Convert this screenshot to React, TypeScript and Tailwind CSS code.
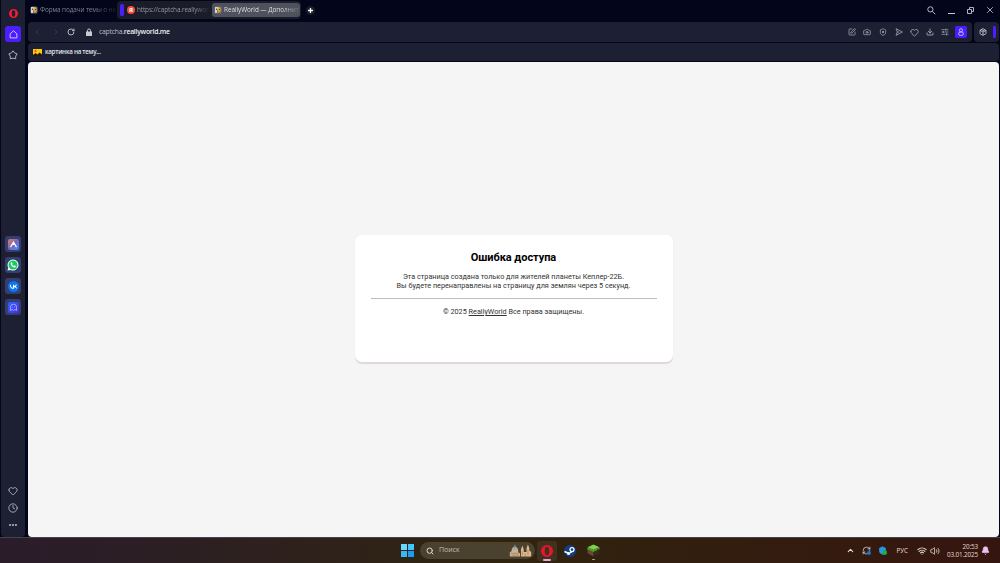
import {
  Bell,
  Camera,
  ChevronLeft,
  ChevronRight,
  ChevronUp,
  Clock,
  Download,
  Ellipsis,
  Heart,
  RefreshCw,
  RotateCw,
  Search,
  Shield,
  SlidersHorizontal,
  SquarePen,
  Volume2,
  Wifi,
  X,
} from "lucide-react";

function OperaLogo({ className }: { className?: string }) {
  return (
    <svg viewBox="0 0 24 24" className={className} aria-label="Opera">
      <path
        fillRule="evenodd"
        fill="currentColor"
        d="M12 0a12 12 0 0 1 0 24a12 12 0 0 1 0-24zM12 3.500a4.600 8.500 0 0 0 0 17a4.600 8.500 0 0 0 0-17z"
      />
    </svg>
  );
}

function SiteIcon() {
  return (
    <svg viewBox="0 0 16 16" className="size-[8px] shrink-0">
      <rect x="1" y="1" width="14" height="14" rx="3" fill="#6d7078" />
      <path d="M2 2h7v5H6v7H2z" fill="#d4d4d4" />
      <path d="M8 3h5v8l-4 3-2-5z" fill="#e3a324" />
      <path d="M4 5h2v3H4zM10 6h2v2h-2z" fill="#504f55" />
    </svg>
  );
}

function Tabs() {
  return (
    <div className="flex h-[22px] items-center pb-[2px] text-[6.400px]">
      <div className="flex w-[89px] items-center gap-[2px] pl-[2px]">
        <SiteIcon />
        <span className="whitespace-nowrap bg-gradient-to-r from-[#858896] from-70% to-[#1b1d2b] bg-clip-text tracking-[-0.110px] text-transparent">
          Форма подачи темы о не
        </span>
      </div>
      <div className="flex h-[18px] w-[184px] shrink-0 items-center rounded-[4px] bg-[#1a1c2a] pl-[3px]">
        <span className="h-[12px] w-[4px] shrink-0 rounded-[1.500px] bg-[#4a1ffc]" />
        <span className="ml-[3px] flex size-[8px] shrink-0 items-center justify-center rounded-full bg-[#fb4b38] text-[6px] font-bold leading-none text-white">
          Я
        </span>
        <span className="ml-[2px] w-[73px] whitespace-nowrap bg-gradient-to-r from-[#9b9eaa] from-80% to-[#1b1d2b] bg-clip-text tracking-[-0.120px] text-transparent">
          https://captcha.reallyworl
        </span>
        <div className="ml-[2px] flex h-[14px] w-[88px] items-center gap-[2px] rounded-[3px] bg-[#4f515c] pl-[2px]">
          <SiteIcon />
          <span className="whitespace-nowrap bg-gradient-to-r from-[#f0f0f3] from-75% to-[#6b6d78] bg-clip-text font-medium tracking-[-0.060px] text-transparent">
            ReallyWorld — Дополнит
          </span>
        </div>
      </div>
      <span className="ml-[5px] flex size-[9px] items-center justify-center rounded-full bg-[#1b1d2b]">
        <svg viewBox="0 0 10 10" className="size-[7px] text-white">
          <path d="M5 1.500v7M1.500 5h7" stroke="currentColor" strokeWidth="1.800" />
        </svg>
      </span>
      <div className="ml-auto flex items-center gap-[10px] pr-[4px] text-[#c6c8d0]">
        <svg viewBox="0 0 24 24" fill="none" stroke="currentColor" strokeWidth="2.500" className="mr-px size-[9px]">
          <circle cx="9" cy="9" r="7" />
          <path d="m14 14 8 8" />
        </svg>
        <svg viewBox="0 0 9 9" className="size-[9px]">
          <path d="M1 7.500h7" stroke="currentColor" />
        </svg>
        <svg viewBox="0 0 9 9" fill="none" stroke="currentColor" strokeWidth="0.900" className="size-[9px]">
          <path d="M1.500 3.500h4v4h-4zM3.500 3V1.500h4v4H6" />
        </svg>
        <X className="size-[10px]" />
      </div>
    </div>
  );
}

function AddressBar() {
  return (
    <div className="flex h-[20px] gap-[2px] text-[#b2b5c1]">
      <div className="flex flex-1 items-center rounded-[4px] bg-[#1c2032] pl-[5px] pr-[5px]">
        <ChevronLeft className="size-[8px] text-[#464a5b]" />
        <ChevronRight className="ml-[11px] size-[8px] text-[#464a5b]" />
        <RotateCw className="ml-[7px] size-[8px] text-[#d0d2da]" strokeWidth={2.500} />
        <svg viewBox="0 0 8 8" className="ml-[10px] size-[8px] text-[#c8cad2]">
          <path d="M1 3.500h6V8H1z" fill="currentColor" />
          <path d="M2.500 4V2.500a1.500 1.500 0 0 1 3 0V4" fill="none" stroke="currentColor" />
        </svg>
        <span className="ml-[6px] text-[6.800px] tracking-[-0.230px] text-[#b9bbc5]">
          captcha.<span className="font-semibold text-[#f0f0f4]">reallyworld.me</span>
        </span>
        <div className="ml-auto flex items-center gap-[7.600px]">
          <SquarePen className="size-[8px]" />
          <Camera className="size-[8px]" />
          <span className="relative size-[8px]">
            <Shield className="size-[8px]" />
            <span className="absolute left-[3px] top-[3px] size-[2px] rounded-full bg-[#b2b5c1]" />
          </span>
          <svg viewBox="0 0 24 24" fill="none" stroke="currentColor" strokeWidth="2.200" strokeLinejoin="round" className="size-[8px]">
            <path d="M3 2l19 10L3 22l4-10zM7 12h6" />
          </svg>
          <Heart className="size-[9px] -mx-[0.500px]" />
          <Download className="size-[8px]" strokeWidth={2.500} />
          <SlidersHorizontal className="size-[8px]" />
          <span className="-ml-[2px] flex size-[12px] items-center justify-center rounded-[2px] bg-[#4a1ffc]">
            <svg viewBox="0 0 8 8" fill="none" stroke="#c9bfff" strokeWidth="0.900" className="size-[8px]">
              <circle cx="4" cy="2.300" r="1.600" />
              <rect x="1.600" y="4.100" width="4.800" height="3.300" rx="1.600" />
            </svg>
          </span>
        </div>
      </div>
      <div className="flex w-[25px] items-center justify-between rounded-[4px] bg-[#1c2032] pl-[5px] pr-[3px]">
        <svg viewBox="0 0 24 24" fill="none" stroke="#d0d2da" strokeWidth="2.400" strokeLinejoin="round" className="size-[8px]">
          <path d="m12 2 9 5v10l-9 5-9-5V7zM3 7l9 5 9-5M12 12v10M7.500 4.500l9 5" />
        </svg>
        <span className="h-[12px] w-[3px] rounded-[1px] bg-[#4a1ffc]" />
      </div>
    </div>
  );
}

function BookmarksBar() {
  return (
    <div className="mt-px flex h-[18px] items-center gap-[3px] rounded-[4px] bg-[#1c2032] pl-[5px]">
      <svg viewBox="0 0 18 14" className="h-[7px] w-[9px]">
        <path d="M0 0h18v14H0z" fill="#fdc70c" />
        <path d="M0 14V12l5-4 4 3 4-4 5 4v3z" fill="#26190a" />
        <circle cx="5" cy="4" r="2" fill="#ee3c21" />
      </svg>
      <span className="text-[6.200px] font-semibold tracking-[-0.240px] text-[#e2e3e9]">картинка на тему...</span>
    </div>
  );
}

function Sidebar() {
  return (
    <aside className="ml-px flex w-[24px] flex-col items-center rounded-b-[4px] bg-[#1c2032] text-[#babdc9]">
      <OperaLogo className="mt-[9px] h-[9px] w-[9px] text-[#f21c35]" />
      <span className="mt-[8px] flex size-[16px] items-center justify-center rounded-[3px] bg-[#4a1ffc]">
        <svg viewBox="0 0 24 24" fill="none" stroke="#d6ceff" strokeWidth="2.500" className="size-[9px]">
          <path d="M3 10 12 2l9 8v11H3z" strokeLinejoin="round" />
        </svg>
      </span>
      <svg viewBox="0 0 24 24" fill="none" stroke="currentColor" strokeWidth="2.200" strokeLinejoin="round" className="mt-[8px] size-[10px]">
        <path d="m12 2 3.800 5L22 9.500l-3.500 5.200V21L12 19.500 5.500 21v-6.300L2 9.500 8.200 7z" />
      </svg>

      <div className="mt-[176px] flex flex-col gap-[5px]">
        <span className="flex size-[16px] items-center justify-center rounded-[3px] bg-[#343e70]">
          <span className="flex size-[11px] items-center justify-center rounded-[2px] bg-gradient-to-br from-[#ef7544] via-[#7666bd] to-[#2a91f5]">
            <svg viewBox="0 0 12 12" fill="none" stroke="white" strokeWidth="1.700" className="size-[9px]">
              <path d="M2 9.500 6 3 10 9.500M6 3v3.500" />
            </svg>
          </span>
        </span>
        <span className="flex size-[16px] items-center justify-center rounded-[3px] bg-[#343e70]">
          <svg viewBox="0 0 24 24" className="size-[12px]">
            <path d="M12 1a11 11 0 1 1-5 20.800L1 23l1.600-5.500A11 11 0 0 1 12 1z" fill="#eefbef" />
            <circle cx="12" cy="12" r="9" fill="#15cb65" />
            <path d="M8.500 6.500c-4 3 3.500 12.500 8.300 10.200l.9-2.500-3-1.500-1.200 1.300c-1.300-.5-2.700-2-3.300-3.400l1-1.200-1.300-2.900z" fill="white" />
          </svg>
        </span>
        <span className="flex size-[16px] items-center justify-center rounded-[3px] bg-[#343e70]">
          <svg viewBox="0 0 24 24" className="size-[11px]">
            <circle cx="12" cy="12" r="12" fill="#0877f2" />
            <path d="M5 8c.3 5 3 8 7 8V8M18.500 8c-.8 2.500-3 4-6 4 3 0 5.500 1.500 6.500 4" fill="none" stroke="white" strokeWidth="2.300" />
          </svg>
        </span>
        <span className="flex size-[16px] items-center justify-center rounded-[3px] bg-[#343e70]">
          <span className="flex size-[11px] items-center justify-center rounded-[2px] bg-gradient-to-br from-[#2563f7] to-[#4925f5]">
            <svg viewBox="0 0 12 12" fill="none" stroke="#a2a4ff" strokeWidth="1.300" className="size-[9px]">
              <path d="M2 10V5.500a4 4 0 0 1 8 0V10L8 8.500 6 10 4 8.500zM4.500 5v1M7.500 5v1" />
            </svg>
          </span>
        </span>
      </div>

      <div className="mt-auto flex flex-col items-center gap-[7px] pb-[7px]">
        <Heart className="size-[10px]" />
        <Clock className="size-[10px]" />
        <Ellipsis className="size-[10px]" strokeWidth={3} />
      </div>
    </aside>
  );
}

function ErrorPage() {
  return (
    <main className="mt-px flex flex-1 flex-col items-center rounded-[4px] bg-[#f5f5f5] pt-[173px] font-[Roboto,sans-serif]">
      <section className="h-[127px] w-[318px] rounded-[7px] bg-white px-[16px] text-center text-[7.280px] leading-[9px] text-[#333] shadow-[0_2px_1px_#e0d8d8]">
        <h1 className="pt-[16px] text-[11px] font-bold leading-[13px] tracking-[-0.050px] text-black">Ошибка доступа</h1>
        <p className="mt-[8px]">
          Эта страница создана только для жителей планеты Кеплер-22Б.
          <br />
          Вы будете перенаправлены на страницу для землян через 5 секунд.
        </p>
        <hr className="mt-[8px] border-[#bcbcbc]" />
        <p className="mt-[8px]">
          © 2025 <a className="underline">ReallyWorld</a> Все права защищены.
        </p>
      </section>
    </main>
  );
}

function Taskbar() {
  return (
    <footer className="flex h-[26px] items-center border-t border-[#45424f] bg-gradient-to-r from-[#2b1c2b] via-[#30240f] via-50% to-[#35150f] text-[#e2d9d8]">
      <div className="ml-[401px] grid size-[13px] grid-cols-2 gap-px">
        <span className="bg-[#68d8fc]" />
        <span className="bg-[#46c6fa]" />
        <span className="bg-[#38b7f7]" />
        <span className="bg-[#1b9cf3]" />
      </div>
      <div className="ml-[6px] flex h-[17px] w-[115px] items-center rounded-full bg-[#4a412f] pl-[6px] pr-[3px]">
        <Search className="size-[8px]" strokeWidth={3} />
        <span className="ml-[5px] text-[7px] text-[#c6bfb2]">Поиск</span>
        <svg viewBox="0 0 48 28" className="ml-auto h-[13px] w-[23px]">
          <path d="M1 27V18l4-3v-3a6 6 0 0 1 10-4 6 6 0 0 1 4 5v5l4 2v7z" fill="#d0b08c" />
          <path d="M6 12c0-9 12-9 12 0zM11 2h2v4h-2z" fill="#91a5b5" />
          <path d="M25 27V12l3-9 3 9v5h6V9l3-8 3 8v5l4 3v10z" fill="#dfb78a" />
          <path d="M3 20h18M5 24h16M28 16v8M34 20v7M40 12v12" stroke="#8b6c50" strokeWidth="1.200" />
        </svg>
      </div>
      <div className="ml-[2px] flex h-[20px] w-[20px] flex-col items-center justify-end rounded-[3px] bg-[#40321f]">
        <OperaLogo className="size-[12px] text-[#e9142d]" />
        <span className="mt-[2px] h-[1.500px] w-[8px] rounded-full bg-[#e6a4e4]" />
      </div>
      <svg viewBox="0 0 24 24" className="ml-[7px] size-[12px]">
        <circle cx="12" cy="12" r="12" fill="#123d80" />
        <path d="M1 13 10 17l6-4 3-6" fill="none" stroke="white" strokeWidth="3" />
        <circle cx="16" cy="9" r="4" fill="#123d80" stroke="white" strokeWidth="2.500" />
        <circle cx="9" cy="17" r="3" fill="white" />
      </svg>
      <div className="ml-[11px] flex h-[19px] flex-col items-center justify-end">
        <svg viewBox="0 0 24 24" className="size-[13px]">
          <path d="m1 6 11-5 11 5-11 5z" fill="#7ed34c" />
          <path d="M1 6v11l11 6V11z" fill="#6b4731" />
          <path d="M23 6v11l-11 6V11z" fill="#3d291c" />
          <path d="m1 6 11 5v4l-3-3-2 1-3-3-3 1zM23 6l-11 5v4l3-3 2 1 3-4 3 1z" fill="#48a82d" />
        </svg>
        <span className="mt-[2px] h-[1.500px] w-[3px] rounded-full bg-[#aaa198]" />
      </div>

      <div className="ml-auto flex items-center pr-[10px]">
        <ChevronUp className="size-[9px]" strokeWidth={3} />
        <span className="relative ml-[7px] size-[9px]">
          <RefreshCw className="size-[9px]" />
          <span className="absolute bottom-0 right-0 size-[4px] rounded-full bg-[#087be5]" />
        </span>
        <span className="relative ml-[7px] size-[9px]">
          <Shield className="size-[9px] fill-[#2896e7] text-[#2896e7]" />
          <span className="absolute bottom-0 right-0 size-[5px] rounded-full bg-[#23a953]" />
        </span>
        <span className="ml-[9px] text-[6.300px]">РУС</span>
        <Wifi className="ml-[9px] size-[10px]" strokeWidth={2.500} />
        <Volume2 className="ml-[3px] size-[10px]" />
        <div className="ml-[7px] text-right text-[6.300px] leading-[8px] tracking-[-0.120px]">
          <p>20:53</p>
          <p>03.01.2025</p>
        </div>
        <Bell className="ml-[3px] size-[9px] fill-[#eec0ee] text-[#eec0ee]" />
      </div>
    </footer>
  );
}

export default function App() {
  return (
    <div className="flex h-[563px] w-[1000px] flex-col overflow-hidden bg-[#03051a] font-['Open_Sans','Noto_Sans',sans-serif]">
      <div className="flex h-[537px] gap-[3px] pr-px">
        <Sidebar />
        <div className="flex min-w-0 flex-1 flex-col">
          <Tabs />
          <AddressBar />
          <BookmarksBar />
          <ErrorPage />
        </div>
      </div>
      <Taskbar />
    </div>
  );
}
